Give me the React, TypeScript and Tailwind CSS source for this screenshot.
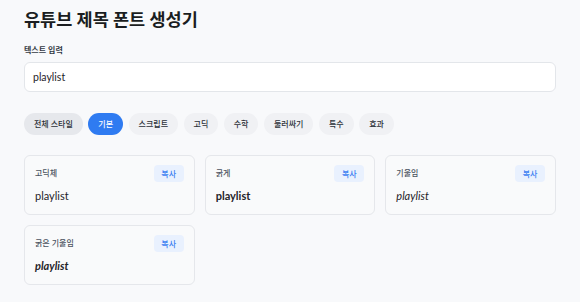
import { useState } from "react";

const tabs = ["전체 스타일", "기본", "스크립트", "고딕", "수학", "둘러싸기", "특수", "효과"];

const styles = [
  { name: "고딕체", cls: "font-normal" },
  { name: "굵게", cls: "font-bold" },
  { name: "기울임", cls: "italic" },
  { name: "굵은 기울임", cls: "font-bold italic" },
];

export default function App() {
  const [text, setText] = useState("playlist");
  const [active, setActive] = useState("기본");

  return (
    <div className="min-h-screen bg-[#f8f9fb] px-6 pt-[7px] pb-4 font-['Lato','Noto_Sans_CJK_KR',sans-serif] text-[#1f2329]">
      <h1 className="text-[17.5px] font-bold leading-[26px] text-[#1a1d21]">유튜브 제목 폰트 생성기</h1>

      <div className="mt-[11px] text-[8px] font-semibold leading-[12px] text-[#333a44]">텍스트 입력</div>
      <input
        value={text}
        onChange={(e) => setText(e.target.value)}
        className="mt-[6px] h-[30px] w-full rounded-[6px] border border-[#e3e6ea] bg-white px-2 text-[10.5px] text-[#1f2329] outline-none"
      />

      <div className="mt-[21px] flex gap-[5.5px]">
        {tabs.map((t) => (
          <button
            key={t}
            onClick={() => setActive(t)}
            className={
              "h-[22px] rounded-full px-[10px] text-[8px] font-medium leading-none " +
              (t === active
                ? "bg-[#2f7bf1] text-white"
                : t === "전체 스타일"
                ? "bg-[#e6e8ec] text-[#2b3038]"
                : "bg-[#f0f1f4] text-[#2b3038]")
            }
          >
            {t}
          </button>
        ))}
      </div>

      <div className="mt-[20px] grid grid-cols-3 gap-[10px]">
        {styles.map((s) => (
          <div key={s.name} className="h-[60px] rounded-[6px] border border-[#e5e7eb] bg-[#f9fafb] px-[10px] pt-[9px]">
            <div className="flex items-start justify-between">
              <span className="mt-[2px] text-[8px] font-medium text-[#4b5360]">{s.name}</span>
              <span className="flex h-[17px] w-[30px] items-center justify-center rounded-[4px] bg-[#e9f1fe] text-[8px] font-medium text-[#3b7ff2]">
                복사
              </span>
            </div>
            <div className={"mt-[6px] text-[11px] text-[#1f2329] " + s.cls}>{text}</div>
          </div>
        ))}
      </div>
    </div>
  );
}
